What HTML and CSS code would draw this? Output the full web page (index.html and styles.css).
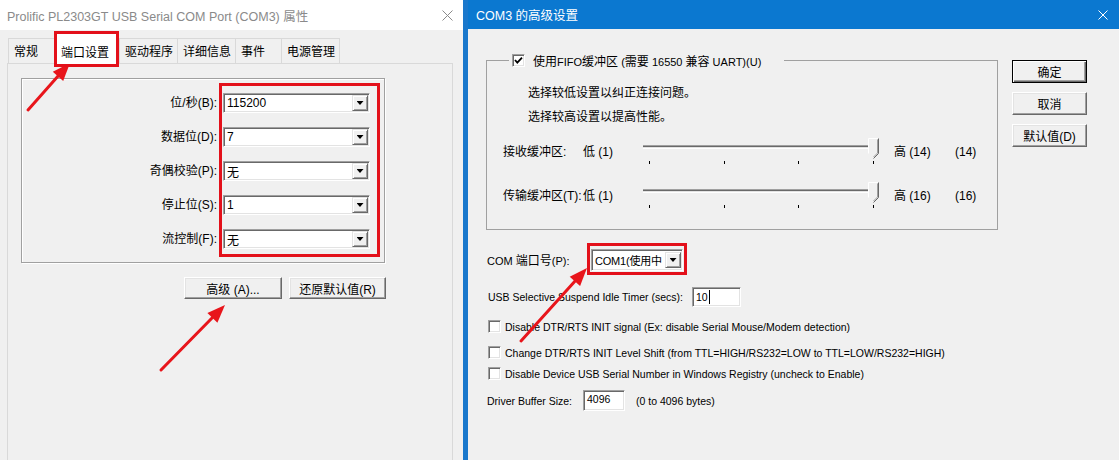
FILE: index.html
```html
<!DOCTYPE html>
<html lang="zh-CN">
<head>
    <meta charset="UTF-8">
    <title>COM3 的高级设置</title>
    <link rel="stylesheet" href="styles.css">
</head>
<body>
<div class="screen">

    <!-- properties dialog (inactive) -->
    <section class="win win-props">
        <div class="titlebar titlebar-inactive">
            <span>Prolific PL2303GT USB Serial COM Port (COM3) 属性</span>
            <svg class="close" width="11" height="11" viewBox="0 0 11 11">
                <path d="M0.5 0.5 L10.5 10.5 M10.5 0.5 L0.5 10.5" stroke="#8a8a8a" stroke-width="1"/>
            </svg>
        </div>

        <div class="tabs">
            <div class="tab tab-short">常规</div>
            <div class="tab tab-active">端口设置</div>
            <div class="tab">驱动程序</div>
            <div class="tab">详细信息</div>
            <div class="tab tab-short">事件</div>
            <div class="tab tab-last">电源管理</div>
        </div>

        <div class="tab-panel">
            <div class="group port-group">
                <div class="field-labels">
                    <label>位/秒(B):</label>
                    <label>数据位(D):</label>
                    <label>奇偶校验(P):</label>
                    <label>停止位(S):</label>
                    <label>流控制(F):</label>
                </div>
                <div class="mark field-combos">
                    <div class="combo"><span>115200</span><span class="drop"></span></div>
                    <div class="combo"><span>7</span><span class="drop"></span></div>
                    <div class="combo"><span>无</span><span class="drop"></span></div>
                    <div class="combo"><span>1</span><span class="drop"></span></div>
                    <div class="combo"><span>无</span><span class="drop"></span></div>
                </div>
            </div>
            <div class="panel-buttons">
                <button class="btn btn-adv">高级 (A)...</button>
                <button class="btn btn-restore">还原默认值(R)</button>
            </div>
        </div>
    </section>

    <!-- advanced settings dialog (active) -->
    <section class="win win-adv">
        <div class="titlebar titlebar-active">
            <span>COM3 的高级设置</span>
            <svg class="close" width="10" height="10" viewBox="0 0 10 10">
                <path d="M0.5 0.5 L9.5 9.5 M9.5 0.5 L0.5 9.5" stroke="#fff" stroke-width="1"/>
            </svg>
        </div>

        <div class="adv-body">
            <div class="adv-main">
                <fieldset class="fifo">
                    <legend>
                        <span class="chk chk-on">
                            <svg width="11" height="11" viewBox="0 0 11 11"><path d="M2 5 L4.3 7.6 L9 2.6" fill="none" stroke="#000" stroke-width="1.8"/></svg>
                        </span>
                        <span><span class="cjk">使用</span>FIFO<span class="cjk">缓冲区</span> (<span class="cjk">需要</span> 16550 <span class="cjk">兼容</span> UART)(U)</span>
                    </legend>
                    <div class="fifo-body">
                        <p class="hint">选择较低设置以纠正连接问题。</p>
                        <p class="hint hint-2">选择较高设置以提高性能。</p>

                        <div class="slider-row">
                            <span class="s-label">接收缓冲区:</span>
                            <span class="s-low">低 (1)</span>
                            <svg class="slider" width="240" height="30" viewBox="0 0 240 30">
                                <rect x="3" y="9" width="233" height="1" fill="#a0a0a0"/>
                                <rect x="3" y="10" width="233" height="1" fill="#696969"/>
                                <rect x="3" y="11" width="233" height="1" fill="#e3e3e3"/>
                                <rect x="3" y="12" width="233" height="1" fill="#fff"/>
                                <g fill="#000">
                                    <rect x="9" y="25" width="1" height="3"/>
                                    <rect x="84" y="25" width="1" height="3"/>
                                    <rect x="158" y="25" width="1" height="3"/>
                                    <rect x="233" y="25" width="1" height="3"/>
                                </g>
                                <path d="M228.5 17.5 V2.5 H238.5 V17.5 L233.5 22.5 Z" fill="#f0f0f0"/>
                                <path d="M228.5 17.5 V2.5 H238" fill="none" stroke="#fff"/>
                                <path d="M238.5 2.5 V17.5 L233.5 22.5" fill="none" stroke="#696969"/>
                                <path d="M237.5 3.5 V17 L233.5 21" fill="none" stroke="#a0a0a0"/>
                            </svg>
                            <span class="s-high">高 (14)</span>
                            <span>(14)</span>
                        </div>

                        <div class="slider-row slider-row-2">
                            <span class="s-label">传输缓冲区(T):</span>
                            <span class="s-low">低 (1)</span>
                            <svg class="slider" width="240" height="30" viewBox="0 0 240 30">
                                <rect x="3" y="9" width="233" height="1" fill="#a0a0a0"/>
                                <rect x="3" y="10" width="233" height="1" fill="#696969"/>
                                <rect x="3" y="11" width="233" height="1" fill="#e3e3e3"/>
                                <rect x="3" y="12" width="233" height="1" fill="#fff"/>
                                <g fill="#000">
                                    <rect x="9" y="25" width="1" height="3"/>
                                    <rect x="84" y="25" width="1" height="3"/>
                                    <rect x="158" y="25" width="1" height="3"/>
                                    <rect x="233" y="25" width="1" height="3"/>
                                </g>
                                <path d="M228.5 17.5 V2.5 H238.5 V17.5 L233.5 22.5 Z" fill="#f0f0f0"/>
                                <path d="M228.5 17.5 V2.5 H238" fill="none" stroke="#fff"/>
                                <path d="M238.5 2.5 V17.5 L233.5 22.5" fill="none" stroke="#696969"/>
                                <path d="M237.5 3.5 V17 L233.5 21" fill="none" stroke="#a0a0a0"/>
                            </svg>
                            <span class="s-high">高 (16)</span>
                            <span>(16)</span>
                        </div>
                    </div>
                </fieldset>

                <div class="row com-row">
                    <span class="com-label">COM <span class="cjk">端口号</span>(P):</span>
                    <div class="mark com-mark">
                        <div class="combo combo-com"><span class="combo-text">COM1(使用中</span><span class="drop"></span></div>
                    </div>
                </div>

                <div class="row usb-row">
                    <span class="usb-label">USB Selective Suspend Idle Timer (secs):</span>
                    <div class="edit edit-timer">10<span class="caret"></span></div>
                </div>

                <div class="check-row">
                    <span class="chk"></span>
                    <span>Disable DTR/RTS INIT signal (Ex: disable Serial Mouse/Modem detection)</span>
                </div>
                <div class="check-row check-row-2">
                    <span class="chk"></span>
                    <span>Change DTR/RTS INIT Level Shift (from TTL=HIGH/RS232=LOW to TTL=LOW/RS232=HIGH)</span>
                </div>
                <div class="check-row check-row-3">
                    <span class="chk"></span>
                    <span>Disable Device USB Serial Number in Windows Registry (uncheck to Enable)</span>
                </div>

                <div class="row buffer-row">
                    <span class="buffer-label">Driver Buffer Size:</span>
                    <div class="edit edit-buffer">4096</div>
                    <span class="buffer-note">(0 to 4096 bytes)</span>
                </div>
            </div>

            <div class="adv-side">
                <button class="btn btn-default">确定</button>
                <button class="btn">取消</button>
                <button class="btn">默认值(D)</button>
            </div>
        </div>
    </section>

    <!-- annotation arrows -->
    <svg class="arrows" width="1119" height="460" viewBox="0 0 1119 460">
        <g stroke="#e8151b" stroke-width="3" stroke-linecap="round">
            <line x1="28" y1="110" x2="59" y2="75"/>
            <line x1="161" y1="370" x2="213" y2="317"/>
            <line x1="521" y1="341" x2="576" y2="280"/>
        </g>
        <g fill="#e8151b">
            <polygon points="70,63 63.2,81.1 52.8,71.7"/>
            <polygon points="225,305 217.4,322.7 207.4,312.9"/>
            <polygon points="587,268 580.1,286.1 569.7,276.7"/>
        </g>
    </svg>
</div>
</body>
</html>
```

FILE: styles.css
```css
* {
    box-sizing: border-box;
}

body {
    margin: 0;
    font-family: 'Liberation Sans', 'Noto Sans CJK SC', sans-serif;
    font-size: 12px;
    color: #000;
    background-color: #f0f0f0;
}

.screen {
    position: relative;
    display: flex;
    width: 1119px;
    height: 460px;
    overflow: hidden;
}

.win {
    height: 460px;
    background-color: #f0f0f0;
}

.win-props {
    width: 463px;
    flex: none;
}

.win-adv {
    flex: 1;
    border-left: 5px solid #1a78cc;
}

.cjk {
    font-size: 12px;
}

/* title bars */
.titlebar {
    display: flex;
    align-items: center;
    justify-content: space-between;
}

.titlebar-inactive {
    height: 30px;
    padding: 0 10px 0 7px;
    background-color: #fff;
    color: #8a8a8a;
    font-size: 12.5px;
}

.titlebar-active {
    height: 29px;
    padding: 0 11px 0 8px;
    background-color: #0b78d0;
    color: #fff;
    font-size: 12.5px;
}

/* tabs */
.tabs {
    display: flex;
    align-items: flex-end;
    height: 32px;
    margin: 1px 0 0 8px;
}

.tab {
    height: 25px;
    padding: 0 4px 0 5px;
    line-height: 27px;
    border-top: 1px solid #d9d9d9;
    border-left: 1px solid #d9d9d9;
    white-space: nowrap;
}

.tab-short {
    min-width: 46px;
}

.tab-last {
    border-right: 1px solid #d9d9d9;
}

.tab-active {
    position: relative;
    z-index: 1;
    height: 36px;
    margin-bottom: -4px;
    padding: 6px 7px 0 4px;
    line-height: 26px;
    background-color: #fff;
    border: 3px solid #e3101a;
}

.tab-panel {
    width: 446px;
    height: 400px;
    margin-left: 7px;
    border: 1px solid #d9d9d9;
    background-color: #f0f0f0;
}

/* group boxes */
.group {
    border: 1px solid #a0a0a0;
    box-shadow: inset 1px 1px #fff, 1px 1px #fff;
}

.port-group {
    display: flex;
    width: 364px;
    margin: 14px 0 0 13px;
    padding: 4px 0 5px;
}

.field-labels {
    display: flex;
    flex-direction: column;
    gap: 14px;
    width: 197px;
    padding: 10px 2px 0 0;
    text-align: right;
}

.field-labels label {
    height: 20px;
    line-height: 20px;
}

.mark {
    border: 3px solid #e3101a;
}

.field-combos {
    display: flex;
    flex-direction: column;
    gap: 14px;
    width: 161px;
    padding: 7px 7px 5px 1px;
}

/* combo boxes and edits */
.combo,
.edit {
    display: flex;
    align-items: center;
    background-color: #fff;
    border: 1px solid;
    border-color: #a0a0a0 #fff #fff #a0a0a0;
    box-shadow: inset 1px 1px #696969, inset -1px -1px #e3e3e3;
}

.combo {
    justify-content: space-between;
    width: 147px;
    height: 20px;
    padding: 0 1px 0 3px;
    overflow: hidden;
}

.drop {
    display: flex;
    align-items: center;
    justify-content: center;
    flex: none;
    width: 16px;
    height: 16px;
    background-color: #f0f0f0;
    border: 1px solid;
    border-color: #e3e3e3 #696969 #696969 #e3e3e3;
    box-shadow: inset 1px 1px #fff, inset -1px -1px #a0a0a0;
}

.drop::after {
    content: "";
    width: 7px;
    height: 4px;
    background-color: #000;
    clip-path: polygon(0 0, 100% 0, 50% 100%);
}

/* buttons */
.btn {
    font-family: inherit;
    font-size: 12px;
    color: #000;
    background-color: #f0f0f0;
    border: 1px solid;
    border-color: #fff #696969 #696969 #fff;
    box-shadow: inset -1px -1px #a0a0a0, inset 1px 1px #e3e3e3;
    padding: 0;
}

.panel-buttons {
    display: flex;
    gap: 7px;
    margin: 14px 0 0 176px;
}

.btn-adv {
    width: 98px;
    height: 22px;
}

.btn-restore {
    width: 97px;
    height: 22px;
}

/* advanced dialog */
.adv-body {
    display: flex;
}

.adv-main {
    width: 531px;
    padding-left: 18px;
}

.fifo {
    width: 512px;
    margin: 24px 0 0;
    padding: 0 0 19px;
    border: 1px solid #a0a0a0;
}

.fifo legend {
    display: flex;
    align-items: center;
    gap: 8px;
    height: 14px;
    margin-left: 22px;
    padding: 0 23px 0 3px;
    font-size: 11px;
    white-space: nowrap;
}

.fifo-body {
    padding-top: 18px;
}

.hint {
    margin: 0;
    padding-left: 41px;
    line-height: 16px;
}

.hint-2 {
    margin-top: 8px;
}

.slider-row {
    display: flex;
    align-items: flex-start;
    margin-top: 11px;
    padding-left: 16px;
}

.slider-row-2 {
    margin-top: 14px;
}

.slider-row span {
    margin-top: 8px;
    line-height: 16px;
    white-space: nowrap;
}

.s-label {
    width: 80px;
}

.s-low {
    width: 57px;
}

.slider {
    flex: none;
}

.s-high {
    width: 61px;
    margin-left: 14px;
}

.chk {
    display: inline-flex;
    align-items: center;
    justify-content: center;
    flex: none;
    width: 13px;
    height: 13px;
    background-color: #fff;
    border: 1px solid;
    border-color: #a0a0a0 #fff #fff #a0a0a0;
    box-shadow: inset 1px 1px #696969, inset -1px -1px #e3e3e3;
}

.row {
    display: flex;
    align-items: center;
    font-size: 10.5px;
    white-space: nowrap;
}

.com-row {
    margin-top: 13px;
    padding-left: 1px;
}

.com-label {
    width: 100px;
    font-size: 11px;
}

.com-mark {
    width: 100px;
    padding: 3px 1px 1px 1px;
}

.combo-com {
    width: 92px;
    height: 22px;
    font-size: 11px;
}

.combo-text {
    white-space: nowrap;
    letter-spacing: -0.2px;
}

.usb-row {
    margin-top: 12px;
    padding-left: 2px;
}

.usb-label {
    width: 204px;
}

.edit {
    padding-left: 3px;
}

.edit-timer {
    width: 49px;
    height: 20px;
}

.caret {
    width: 1px;
    height: 14px;
    margin-left: 1px;
    background-color: #000;
}

.check-row {
    display: flex;
    align-items: center;
    gap: 4px;
    height: 13px;
    margin-top: 13px;
    padding-left: 2px;
    font-size: 10.5px;
    white-space: nowrap;
}

.check-row-2 {
    margin-top: 13px;
}

.check-row-3 {
    margin-top: 8px;
}

.buffer-row {
    margin-top: 10px;
    padding-left: 1px;
}

.buffer-label {
    width: 96px;
}

.edit-buffer {
    width: 42px;
    height: 21px;
    align-items: flex-start;
    padding-top: 2px;
}

.buffer-note {
    margin-left: 11px;
}

.adv-side {
    display: flex;
    flex-direction: column;
    gap: 9px;
    margin-left: 13px;
    padding-top: 31px;
}

.adv-side .btn {
    width: 75px;
    height: 23px;
}

.btn-default {
    border: 1px solid #000;
    box-shadow: inset 1px 1px #fff, inset -1px -1px #696969, inset -2px -2px #a0a0a0;
}

.arrows {
    position: absolute;
    top: 0;
    left: 0;
    pointer-events: none;
}
```
